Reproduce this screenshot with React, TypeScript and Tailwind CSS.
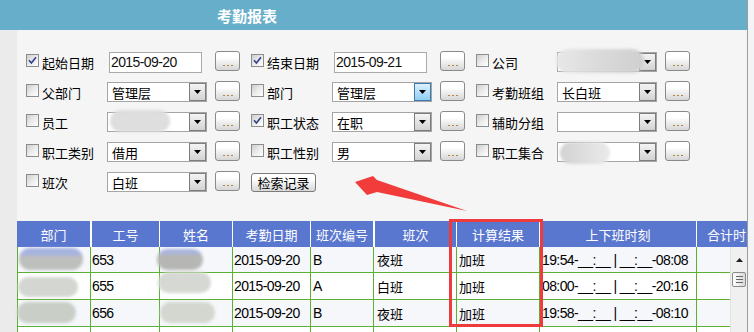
import React from "react";

function Checkbox({ checked }: { checked?: boolean }) {
  return (
    <span className="w-[13px] h-[13px] shrink-0 border border-[#8c8e8e] bg-linear-to-br from-[#cdcdcd] via-[#ebebeb] to-white flex items-center justify-center mb-[3px]">
      {checked && (
        <svg width="9" height="9" viewBox="0 0 9 9">
          <path d="M1 4.3 L3.4 7 L8 1.2" stroke="#34448c" strokeWidth="1.7" fill="none" />
        </svg>
      )}
    </span>
  );
}

function Dots({ ml }: { ml: string }) {
  return (
    <div
      className={`${ml} w-[25px] h-[20px] shrink-0 rounded-[3px] border border-[#8a8a8a] bg-linear-to-b from-white from-30% to-[#d6d6d6] flex items-end justify-center pb-[4px] gap-[2px] mb-[2px]`}
    >
      <span className="w-[2px] h-px bg-[#b0873f]" />
      <span className="w-[2px] h-px bg-[#b0873f]" />
      <span className="w-[2px] h-px bg-[#b0873f]" />
    </div>
  );
}

function Tri() {
  return (
    <svg width="7" height="4" viewBox="0 0 7 4">
      <polygon points="0,0 7,0 3.5,4" fill="#000" />
    </svg>
  );
}

function Select({
  text,
  focused,
  blob,
}: {
  text?: string;
  focused?: boolean;
  blob?: React.ReactNode;
}) {
  return (
    <div className="relative w-[100px] h-[20px] shrink-0 border border-[#a5a5a5] bg-white flex items-center">
      <span className="flex-1 pl-[4px] text-[13px] leading-none text-black whitespace-nowrap">
        {text}
      </span>
      {focused ? (
        <div className="w-[17px] h-[18px] border border-[#3c7bab] bg-linear-to-b from-[#dcf0fd] to-[#8fcdf4] flex items-center justify-center">
          <Tri />
        </div>
      ) : (
        <div className="w-[17px] h-[18px] border border-[#7d7d7d] bg-linear-to-b from-[#f4f4f4] to-[#d3d3d3] flex items-center justify-center">
          <Tri />
        </div>
      )}
      {blob}
    </div>
  );
}

function DateInput({ value }: { value: string }) {
  return (
    <div className="ml-[2px] w-[93px] h-[21px] shrink-0 border border-[#a9a9a9] bg-white flex items-center pl-px text-[14px] tracking-[-0.6px] leading-none text-[#111] whitespace-nowrap font-['Liberation_Sans',sans-serif]">
      {value}
    </div>
  );
}

function Group({
  checked,
  label,
  children,
}: {
  checked?: boolean;
  label: string;
  children: React.ReactNode;
}) {
  return (
    <div className="w-[225px] h-full shrink-0 flex items-center">
      <Checkbox checked={checked} />
      <span className="ml-[3px] w-[65px] shrink-0 text-[13px] leading-none text-black whitespace-nowrap">
        {label}
      </span>
      {children}
    </div>
  );
}

const hw = [
  "w-[73px]",
  "w-[69px]",
  "w-[73px]",
  "w-[78px]",
  "w-[63px]",
  "w-[83px]",
  "w-[83px]",
  "w-[157px]",
  "w-[73px]",
];
const hb = [
  "",
  "border-l-2 border-white",
  "border-l border-white",
  "border-l border-white",
  "border-l border-white",
  "border-l-2 border-white",
  "border-l border-white",
  "border-l border-white",
  "border-l border-white",
];
const heads = ["部门", "工号", "姓名", "考勤日期", "班次编号", "班次", "计算结果", "上下班时刻", "合计时间"];
const bw = [...hw.slice(0, 8), "w-[34px]"];

const rows = [
  { no: "653", date: "2015-09-20", code: "B", shift: "夜班", res: "加班", time: "19:54-__:__ | __:__-08:08" },
  { no: "655", date: "2015-09-20", code: "A", shift: "白班", res: "加班", time: "08:00-__:__ | __:__-20:16" },
  { no: "656", date: "2015-09-20", code: "B", shift: "夜班", res: "加班", time: "19:58-__:__ | __:__-08:10" },
];

const deptBlobs = [
  <div key="a" className="absolute left-[1px] top-[1px] w-[64px] h-[22px] rounded-full blur-[1.5px] bg-linear-to-b from-[#a7b3df] from-30% to-[#bdbfbc] to-40%" />,
  <div key="b" className="absolute left-0 top-[4px] w-[60px] h-[20px] rounded-full blur-[1.5px] bg-[#d4d7d1]" />,
  <div key="c" className="absolute left-[-1px] top-[2px] w-[59px] h-[21px] rounded-full blur-[1.5px] bg-[#c9cec7]" />,
];
const nameBlobs = [
  <div key="a" className="absolute left-[-3px] top-[2px] w-[46px] h-[21px] rounded-full blur-[1.5px] bg-linear-to-b from-[#a9b4de] from-20% to-[#b6b7b5] to-30%" />,
  <div key="b" className="absolute left-[-2px] top-[-1px] w-[53px] h-[21px] rounded-full blur-[1.5px] bg-[#d6d9d3]" />,
  <div key="c" className="absolute left-0 top-[2px] w-[55px] h-[21px] rounded-full blur-[1.5px] bg-[#d3d7d0]" />,
];

const NUM = "font-['Liberation_Sans',sans-serif] text-[14px] tracking-[-0.6px] whitespace-pre";

export default function App() {
  return (
    <div className="relative w-[754px] h-[332px] overflow-hidden flex bg-[#f4f5f7] font-['Noto_Sans_CJK_SC',sans-serif]">
      <div className="w-[747px] shrink-0 flex flex-col">
        <div className="h-[30px] shrink-0 bg-[#67aecb] flex items-center">
          <span className="ml-[217px] text-white font-bold text-[15px] leading-none">考勤报表</span>
        </div>
        <div className="flex flex-1">
          <div className="w-[17px] shrink-0 bg-[#ebebeb]" />
          <div className="flex-1 bg-[#f5f5f5] flex flex-col">
            <div className="pt-[17px] pl-[9px] flex flex-col">
              <div className="h-[30px] flex">
                <Group checked label="起始日期">
                  <DateInput value="2015-09-20" />
                  <Dots ml="ml-[13px]" />
                </Group>
                <Group checked label="结束日期">
                  <DateInput value="2015-09-21" />
                  <Dots ml="ml-[13px]" />
                </Group>
                <Group label="公司">
                  <Select
                    blob={
                      <div className="absolute left-[-2px] top-[-4px] w-[88px] h-[24px] rounded-full blur-[1.5px] bg-linear-to-r from-[#e8e8e8] via-[#dadada] to-[#cfcfcf]" />
                    }
                  />
                  <Dots ml="ml-[8px]" />
                </Group>
              </div>
              <div className="h-[30px] flex">
                <Group label="父部门">
                  <Select text="管理层" />
                  <Dots ml="ml-[8px]" />
                </Group>
                <Group label="部门">
                  <Select text="管理层" focused />
                  <Dots ml="ml-[8px]" />
                </Group>
                <Group label="考勤班组">
                  <Select text="长白班" />
                  <Dots ml="ml-[8px]" />
                </Group>
              </div>
              <div className="h-[30px] flex">
                <Group label="员工">
                  <Select
                    blob={
                      <div className="absolute left-[2px] top-[-3px] w-[60px] h-[22px] rounded-full blur-[1.5px] bg-[#dedede]" />
                    }
                  />
                  <Dots ml="ml-[8px]" />
                </Group>
                <Group checked label="职工状态">
                  <Select text="在职" />
                  <Dots ml="ml-[8px]" />
                </Group>
                <Group label="辅助分组">
                  <Select />
                  <Dots ml="ml-[8px]" />
                </Group>
              </div>
              <div className="h-[30px] flex">
                <Group label="职工类别">
                  <Select text="借用" />
                  <Dots ml="ml-[8px]" />
                </Group>
                <Group label="职工性别">
                  <Select text="男" />
                  <Dots ml="ml-[8px]" />
                </Group>
                <Group label="职工集合">
                  <Select
                    blob={
                      <div className="absolute left-[2px] top-[-1px] w-[50px] h-[22px] rounded-full blur-[1.5px] bg-linear-to-r from-[#d2d2d2] to-[#eaeaea]" />
                    }
                  />
                  <Dots ml="ml-[8px]" />
                </Group>
              </div>
              <div className="h-[30px] flex items-center">
                <Group label="班次">
                  <Select text="白班" />
                  <Dots ml="ml-[8px]" />
                </Group>
                <div className="w-[65px] h-[19px] rounded-[3px] border border-[#7b7b7b] bg-linear-to-b from-white from-30% to-[#d8d8d8] flex items-center justify-center text-[13px] leading-none text-black">
                  检索记录
                </div>
              </div>
            </div>

            <div className="mt-[24px] flex flex-col">
              <div className="w-[730px] h-[26px] overflow-hidden flex bg-[#5a77cf] text-white text-[13px] leading-none">
                {heads.map((h, i) => (
                  <div
                    key={h}
                    className={`${hw[i]} ${hb[i]} shrink-0 flex items-center justify-center whitespace-nowrap`}
                  >
                    {h}
                  </div>
                ))}
              </div>
              <div className="flex">
                <div className="w-[713px] flex flex-col">
                  {rows.map((r, ri) => (
                    <div
                      key={r.no}
                      className={`${ri === 0 ? "h-[26px]" : "h-[27px]"} ${ri === 1 ? "bg-white" : "bg-[#f5f7fa]"} flex border-b border-[#5cb033] text-black leading-none`}
                    >
                      <div className={`${bw[0]} relative shrink-0 border-l border-[#5cb033]`}>{deptBlobs[ri]}</div>
                      <div className={`${bw[1]} shrink-0 border-l border-[#5cb033] flex items-center pl-px ${NUM}`}>{r.no}</div>
                      <div className={`${bw[2]} relative shrink-0 border-l border-[#5cb033]`}>{nameBlobs[ri]}</div>
                      <div className={`${bw[3]} shrink-0 border-l border-[#5cb033] flex items-center pl-px ${NUM}`}>{r.date}</div>
                      <div className={`${bw[4]} shrink-0 border-l border-[#5cb033] flex items-center pl-[2px] ${NUM}`}>{r.code}</div>
                      <div className={`${bw[5]} shrink-0 border-l border-[#5cb033] flex items-center pl-[3px] text-[13px]`}>{r.shift}</div>
                      <div className={`${bw[6]} shrink-0 border-l border-[#5cb033] flex items-center pl-[2px] text-[13px]`}>{r.res}</div>
                      <div className={`${bw[7]} shrink-0 border-l border-[#5cb033] flex items-center pl-[2px] ${NUM}`}>{r.time}</div>
                      <div className={`${bw[8]} shrink-0 border-l border-[#5cb033]`} />
                    </div>
                  ))}
                  <div className="h-[20px] bg-white flex">
                    {bw.map((w, i) => (
                      <div key={i} className={`${w} shrink-0 border-l border-[#5cb033]`} />
                    ))}
                  </div>
                </div>
                <div className="w-[17px] h-[85px] bg-[#f0f0f0] border-l border-[#e2e2e2] flex flex-col items-center">
                  <svg className="mt-[11px]" width="7" height="4" viewBox="0 0 7 4">
                    <polygon points="0,4 7,4 3.5,0" fill="#222" />
                  </svg>
                  <div className="mt-[10px] w-[14px] h-[15px] rounded-[2px] border border-[#8a8a8a] bg-linear-to-r from-white to-[#d9d9d9] flex flex-col items-center justify-center gap-[2px]">
                    <span className="w-[7px] h-px bg-[#666]" />
                    <span className="w-[7px] h-px bg-[#666]" />
                    <span className="w-[7px] h-px bg-[#666]" />
                  </div>
                </div>
              </div>
            </div>
          </div>
        </div>
      </div>
      <div className="w-px shrink-0 bg-[#9c9c9c]" />
      <div className="flex-1 bg-[#f3f4f6]" />

      <div className="absolute left-[449px] top-[219px] w-[94px] h-[108px] border-[3px] border-[#ef3b3b] pointer-events-none" />
      <svg className="absolute left-0 top-0 pointer-events-none" width="754" height="332" viewBox="0 0 754 332">
        <polygon points="355,182 373,176 377,180 467,211 377,192 367,195" fill="#f23b3b" />
      </svg>
    </div>
  );
}
